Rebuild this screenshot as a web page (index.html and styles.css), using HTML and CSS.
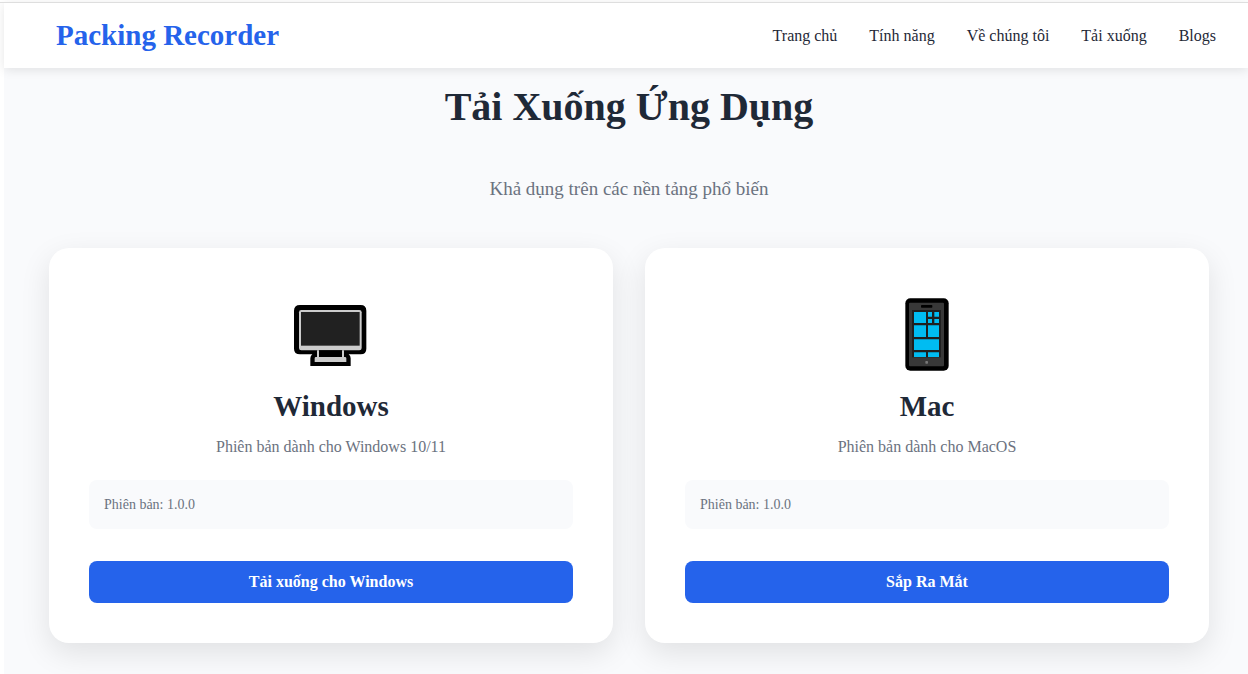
FILE: index.html
```html
<!DOCTYPE html>
<html lang="vi">
<head>
<meta charset="utf-8">
<meta name="viewport" content="width=device-width, initial-scale=1">
<title>Packing Recorder</title>
<link rel="stylesheet" href="styles.css">
</head>
<body>
<div class="page">
  <header class="header">
    <a class="brand" href="#">Packing Recorder</a>
    <nav class="nav">
      <a href="#">Trang chủ</a>
      <a href="#">Tính năng</a>
      <a href="#">Về chúng tôi</a>
      <a href="#">Tải xuống</a>
      <a href="#">Blogs</a>
    </nav>
  </header>
  <main class="download">
    <h1 class="title">Tải Xuống Ứng Dụng</h1>
    <p class="subtitle">Khả dụng trên các nền tảng phổ biến</p>
    <div class="cards">
      <section class="card">
        <svg class="icon" viewBox="33 15 240 240" aria-hidden="true">
          <path d="M60 45H242Q259 45 259 62V176Q259 193 242 193H206Q212 197 212 205V228H91V205Q91 197 97 193H60Q42 193 42 176V62Q42 45 60 45Z" fill="#000"/>
          <rect x="57" y="60" width="188" height="121" rx="7" fill="#ccc"/>
          <rect x="63" y="66" width="176" height="101" fill="#212121"/>
          <path d="M117 181H186V201H117Z" fill="#000"/>
          <path d="M111 181H117V201H186V181H192V201H195Q199 201 199 205V216H104V205Q104 201 108 201H111Z" fill="#ccc"/>
        </svg>
        <h2 class="card-title">Windows</h2>
        <p class="card-text">Phiên bản dành cho Windows 10/11</p>
        <p class="version">Phiên bản: 1.0.0</p>
        <button class="button" type="button">Tải xuống cho Windows</button>
      </section>
      <section class="card">
        <svg class="icon" viewBox="21 15 240 240" aria-hidden="true">
          <rect x="76" y="25" width="130" height="217" rx="15" fill="#000"/>
          <rect x="87" y="38" width="105" height="191" rx="3" fill="#383838"/>
          <rect x="123" y="45" width="34" height="8" rx="2" fill="#000"/>
          <rect x="96" y="60" width="87" height="142" fill="#1f1f1f"/>
          <path d="M102 66H138V99H102ZM144 66H156V80H144ZM163 66H177V80H163ZM144 87H156V99H144ZM163 87H177V99H163ZM102 106H138V141H102ZM144 106H177V141H144ZM102 148H177V180H102ZM102 187H138V201H102ZM144 187H177V201H144Z" fill="#00bcf2"/>
          <rect x="136" y="213" width="8" height="8" rx="2" fill="#777"/>
        </svg>
        <h2 class="card-title">Mac</h2>
        <p class="card-text">Phiên bản dành cho MacOS</p>
        <p class="version">Phiên bản: 1.0.0</p>
        <button class="button" type="button">Sắp Ra Mắt</button>
      </section>
    </div>
  </main>
</div>
</body>
</html>
```
FILE: styles.css
```css
* {
  box-sizing: border-box;
  margin: 0;
}

body {
  background: #fff;
  color: #1f2937;
  font-family: "Liberation Serif", "Times New Roman", serif;
  font-size: 16px;
}

.page {
  display: flex;
  flex-direction: column;
  min-height: 100vh;
  padding-top: 2px;
}

.header {
  position: relative;
  display: flex;
  align-items: center;
  justify-content: space-between;
  margin-left: 4px;
  padding: 17px 32px 16px 52px;
  background: #fff;
  box-shadow: 0 2px 10px rgba(0, 0, 0, 0.1);
}

.header::before {
  content: "";
  position: absolute;
  top: 0;
  left: -4px;
  right: 0;
  height: 1px;
  background: #dedede;
}

.brand {
  color: #2563eb;
  font-size: 29px;
  font-weight: bold;
  line-height: 33px;
  text-decoration: none;
}

.nav {
  display: flex;
  gap: 32px;
  line-height: 20px;
}

.nav a {
  color: #1f2937;
  text-decoration: none;
}

.download {
  flex: 1;
  margin-left: 4px;
  padding: 15px 39px 31px 45px;
  background: #f9fafc;
  text-align: center;
}

.title {
  font-size: 40px;
  line-height: 48px;
}

.subtitle {
  margin: 46px 0 47px;
  color: #6b7280;
  font-size: 19px;
  line-height: 24px;
}

.cards {
  display: grid;
  grid-template-columns: 1fr 1fr;
  gap: 32px;
}

.card {
  display: flex;
  flex-direction: column;
  padding: 47px 40px 40px;
  border-radius: 20px;
  background: #fff;
  box-shadow: 0 10px 30px rgba(0, 0, 0, 0.1);
}

.icon {
  width: 80px;
  height: 80px;
  align-self: center;
}

.card-title {
  margin-top: 15px;
  font-size: 29px;
  line-height: 32px;
}

.card-text {
  margin: 15px 0 23px;
  color: #6b7280;
  line-height: 20px;
}

.version {
  padding: 15px;
  border-radius: 8px;
  background: #f9fafc;
  color: #6b7280;
  font-size: 14px;
  line-height: 19px;
  text-align: left;
}

.button {
  margin-top: 32px;
  padding: 11px 16px;
  border: 0;
  border-radius: 8px;
  background: #2563eb;
  color: #fff;
  font: bold 16px/20px "Liberation Serif", "Times New Roman", serif;
  cursor: pointer;
}
```
